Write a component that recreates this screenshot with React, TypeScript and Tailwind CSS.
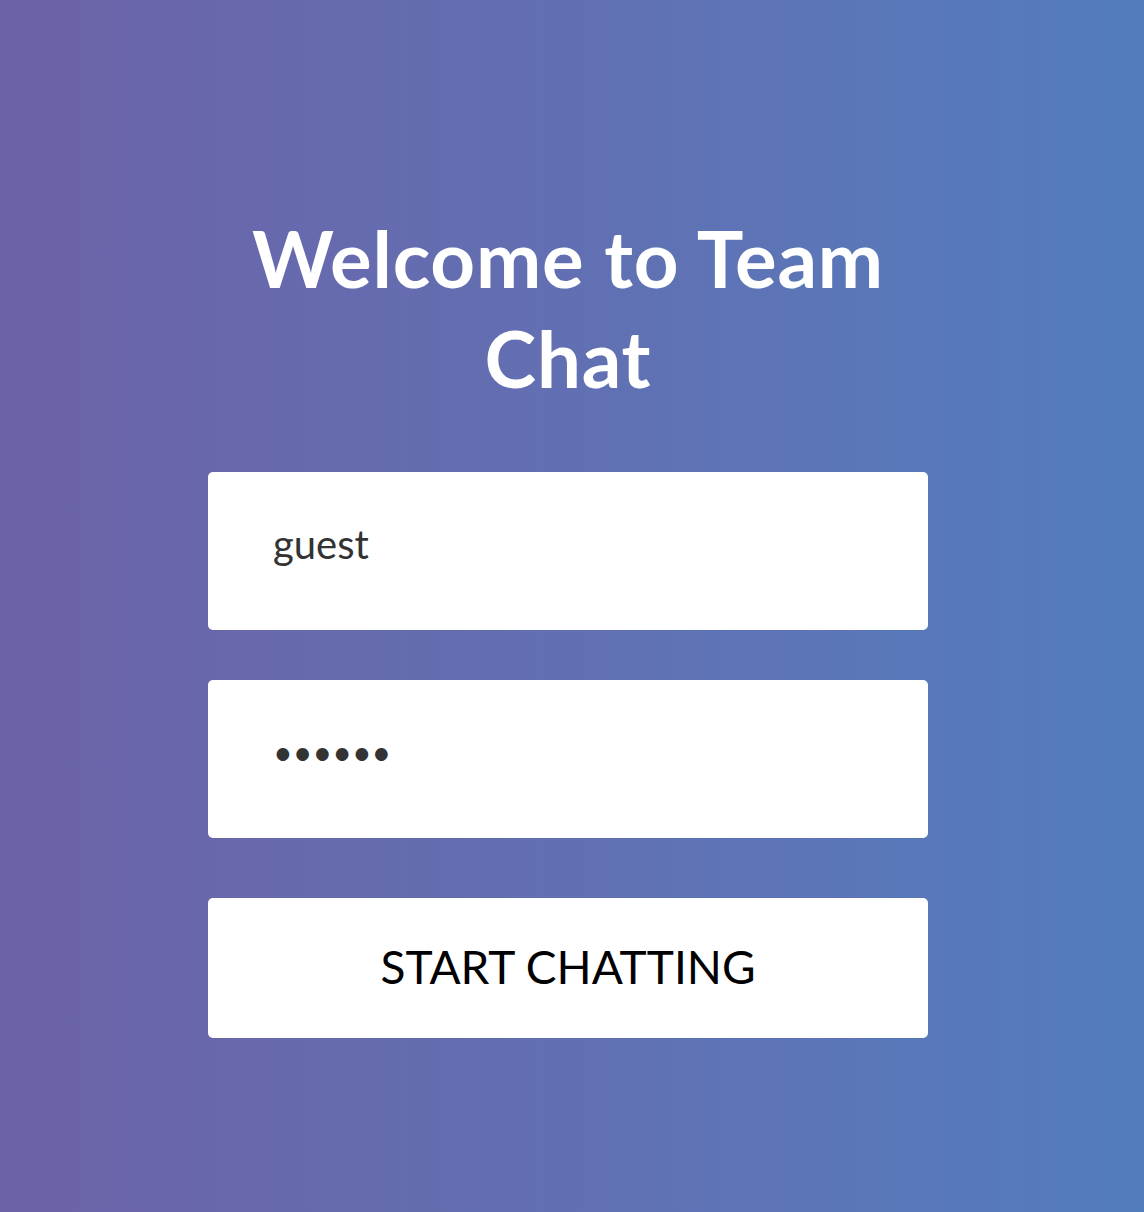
const App = () => {
    return (
        <main className="min-h-screen w-full bg-gradient-to-r from-[#6c62a8] to-[#527dbd] flex justify-center pr-2 font-['Lato',sans-serif]">
            <div className="w-[720px] pt-[208px] flex flex-col">
                <h1 className="text-white font-bold text-[78px] leading-[100px] tracking-[0.8px] text-center px-6">
                    Welcome to Team Chat
                </h1>
                <form className="flex flex-col mt-[64px]" onSubmit={(e) => e.preventDefault()}>
                    <input
                        type="text"
                        defaultValue="guest"
                        className="h-[158px] w-full rounded-[5px] bg-white pl-[65px] pb-[14px] text-[40px] text-[#333] outline-none"
                    />
                    <input
                        type="password"
                        defaultValue="secret"
                        className="mt-[50px] h-[158px] w-full rounded-[5px] bg-white pl-[65px] pb-[16px] text-[34px] text-[#333] outline-none"
                    />
                    <button
                        type="submit"
                        className="mt-[60px] h-[140px] w-full rounded-[5px] bg-white pb-1 text-[46px] text-black uppercase"
                    >
                        Start Chatting
                    </button>
                </form>
            </div>
        </main>
    );
};

export default App;
